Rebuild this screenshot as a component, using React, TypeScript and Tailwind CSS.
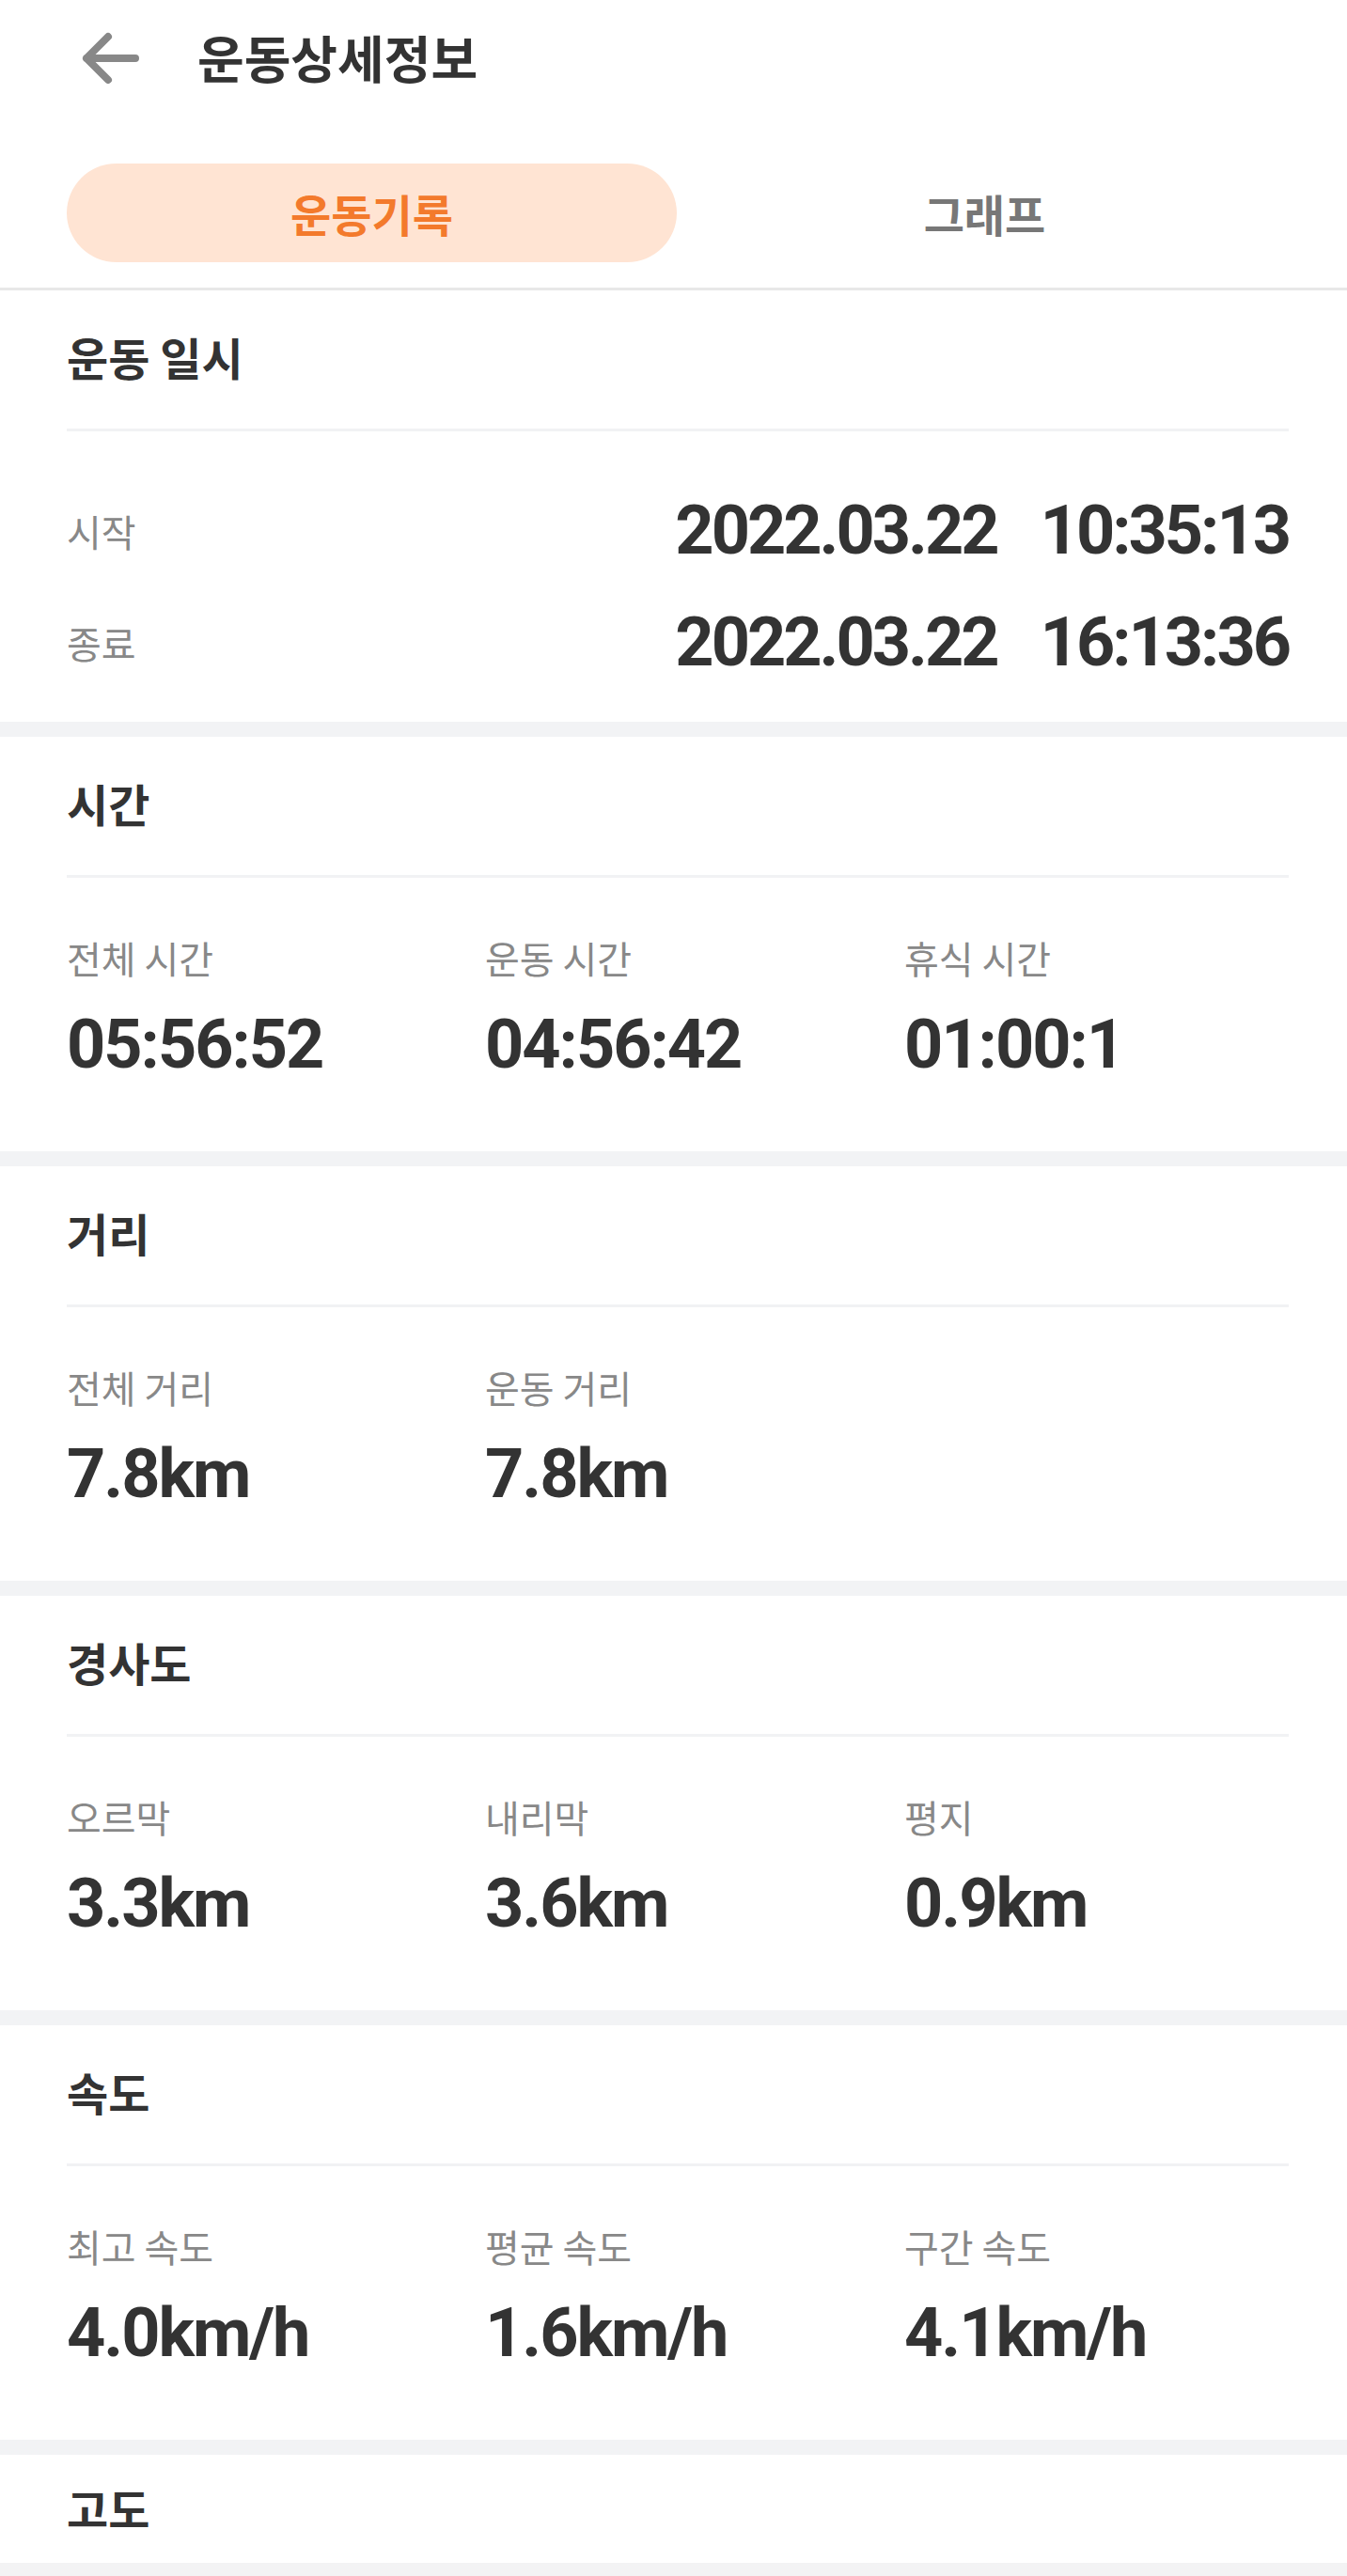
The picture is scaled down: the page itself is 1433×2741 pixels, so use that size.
import React from "react";

const kr = { fontFamily: '"Noto Sans CJK KR", "Noto Sans", sans-serif' };
const num = { fontFamily: 'Roboto, "Noto Sans CJK KR", sans-serif' };

function BackArrow() {
    return (
        <svg width="70" height="56" viewBox="0 0 70 56" fill="none" className="ml-[83px] shrink-0">
            <path d="M61 28H9M32 5L9 28L32 51" stroke="#888888" strokeWidth="8" strokeLinecap="round" strokeLinejoin="round" />
        </svg>
    );
}

function Section({ title, children }: { title: string; children?: React.ReactNode }) {
    return (
        <div className="bg-white">
            <div className="h-[147px] pb-[8px] flex items-center px-[71px] text-[48px] font-bold text-[#333333] leading-none" style={kr}>
                {title}
            </div>
            <div className="ml-[71px] mr-[62px] h-[3px] bg-[#f1f2f4]" />
            {children}
        </div>
    );
}

function Band() {
    return <div className="h-[16px] bg-[#f2f3f5]" />;
}

function Stats({ items }: { items: { label: string; value: string }[] }) {
    return (
        <div className="grid grid-cols-[445px_446px_1fr] px-[71px] pt-[60px] pb-[71px]">
            {items.map((it) => (
                <div key={it.label} className="flex flex-col">
                    <div className="h-[50px] flex items-center text-[40px] text-[#888888] leading-none" style={kr}>
                        {it.label}
                    </div>
                    <div className="mt-[26px] h-[84px] flex items-center text-[72px] font-bold text-[#333333] leading-none tracking-[-2px]" style={num}>
                        {it.value}
                    </div>
                </div>
            ))}
        </div>
    );
}

function DateRow({ label, date, time }: { label: string; date: string; time: string }) {
    return (
        <div className="h-[119px] flex items-center justify-between">
            <div className="text-[40px] text-[#888888] leading-none" style={kr}>
                {label}
            </div>
            <div className="flex items-center gap-[46px] text-[72px] font-bold text-[#333333] leading-none tracking-[-3px]" style={num}>
                <span>{date}</span>
                <span>{time}</span>
            </div>
        </div>
    );
}

export default function App() {
    return (
        <div className="w-[1433px] h-[2741px] overflow-hidden bg-white">
            <div className="h-[124px] flex items-center">
                <BackArrow />
                <div className="ml-[57px] pb-[2px] text-[54px] font-bold text-[#333333] leading-none" style={kr}>
                    운동상세정보
                </div>
            </div>

            <div className="flex items-center pl-[71px] pr-[58px] pt-[50px] pb-[27px]">
                <div className="w-[649px] h-[105px] rounded-full bg-[#ffe4d3] flex items-center justify-center text-[47px] font-bold text-[#f37a2c] leading-none" style={kr}>
                    운동기록
                </div>
                <div className="flex-1 h-[105px] flex items-center justify-center text-[47px] font-bold text-[#777777] leading-none" style={kr}>
                    그래프
                </div>
            </div>
            <div className="h-[3px] bg-[#e8e8e8]" />

            <Section title="운동 일시">
                <div className="pl-[71px] pr-[62px] pt-[46px] pb-[25px]">
                    <DateRow label="시작" date="2022.03.22" time="10:35:13" />
                    <DateRow label="종료" date="2022.03.22" time="16:13:36" />
                </div>
            </Section>
            <Band />

            <Section title="시간">
                <Stats
                    items={[
                        { label: "전체 시간", value: "05:56:52" },
                        { label: "운동 시간", value: "04:56:42" },
                        { label: "휴식 시간", value: "01:00:1" },
                    ]}
                />
            </Section>
            <Band />

            <Section title="거리">
                <Stats
                    items={[
                        { label: "전체 거리", value: "7.8km" },
                        { label: "운동 거리", value: "7.8km" },
                    ]}
                />
            </Section>
            <Band />

            <Section title="경사도">
                <Stats
                    items={[
                        { label: "오르막", value: "3.3km" },
                        { label: "내리막", value: "3.6km" },
                        { label: "평지", value: "0.9km" },
                    ]}
                />
            </Section>
            <Band />

            <Section title="속도">
                <Stats
                    items={[
                        { label: "최고 속도", value: "4.0km/h" },
                        { label: "평균 속도", value: "1.6km/h" },
                        { label: "구간 속도", value: "4.1km/h" },
                    ]}
                />
            </Section>
            <Band />

            <div className="bg-white">
                <div className="h-[115px] pb-[4px] flex items-center px-[71px] text-[48px] font-bold text-[#333333] leading-none" style={kr}>
                    고도
                </div>
                <div className="h-[200px] bg-[#f3f3f4]" />
            </div>
        </div>
    );
}
